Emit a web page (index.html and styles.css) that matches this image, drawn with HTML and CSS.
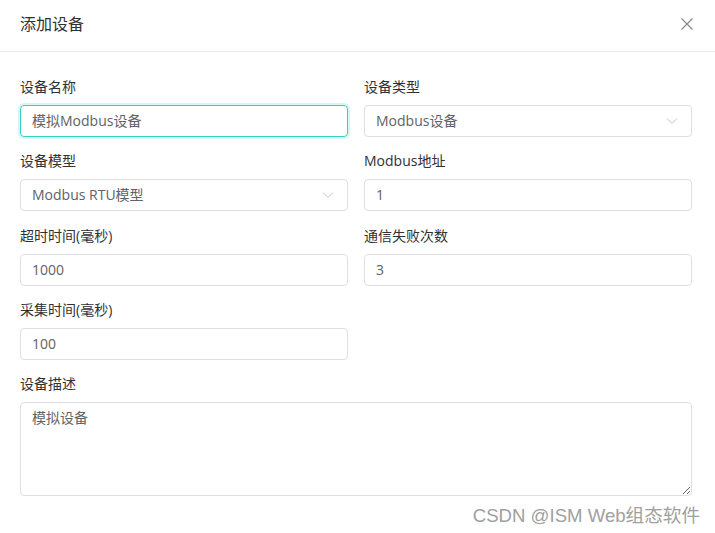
FILE: index.html
```html
<!DOCTYPE html>
<html lang="zh-CN">
<head>
<meta charset="utf-8">
<title>添加设备</title>
<link rel="stylesheet" href="styles.css">
</head>
<body>
<div class="dialog">
  <div class="header">
    <span class="title">添加设备</span>
    <svg class="close" width="14" height="14" viewBox="0 0 14 14"><path d="M1.5 1.5L12.5 12.5M12.5 1.5L1.5 12.5" stroke="#8c8c8c" stroke-width="1.3" fill="none"/></svg>
  </div>
  <div class="body">
    <div class="grid">
      <div class="item">
        <div class="label">设备名称</div>
        <div class="input focus">模拟Modbus设备</div>
      </div>
      <div class="item">
        <div class="label">设备类型</div>
        <div class="input select">Modbus设备<svg class="arrow" width="12" height="8" viewBox="0 0 12 8"><path d="M1 1.5L6 6.5L11 1.5" stroke="#c0c4cc" stroke-width="1" fill="none"/></svg></div>
      </div>
      <div class="item">
        <div class="label">设备模型</div>
        <div class="input select">Modbus RTU模型<svg class="arrow" width="12" height="8" viewBox="0 0 12 8"><path d="M1 1.5L6 6.5L11 1.5" stroke="#c0c4cc" stroke-width="1" fill="none"/></svg></div>
      </div>
      <div class="item">
        <div class="label">Modbus地址</div>
        <div class="input">1</div>
      </div>
      <div class="item shift">
        <div class="label">超时时间(毫秒)</div>
        <div class="input">1000</div>
      </div>
      <div class="item shift">
        <div class="label">通信失败次数</div>
        <div class="input">3</div>
      </div>
      <div class="item">
        <div class="label">采集时间(毫秒)</div>
        <div class="input">100</div>
      </div>
      <div class="item"></div>
      <div class="item wide">
        <div class="label">设备描述</div>
        <textarea class="textarea">模拟设备</textarea>
      </div>
    </div>
  </div>
  <div class="watermark">CSDN @ISM Web组态软件</div>
</div>
</body>
</html>
```
FILE: styles.css
```css
* { box-sizing: border-box; }
html, body { margin: 0; padding: 0; background: #fff; }
body {
  font-family: "Open Sans", "Noto Sans CJK SC", sans-serif;
  color: #303133;
  width: 715px;
  height: 533px;
  overflow: hidden;
}
.dialog { width: 715px; height: 533px; position: relative; }
.header {
  height: 52px;
  border-bottom: 1px solid #ebebeb;
  display: flex;
  align-items: center;
  justify-content: space-between;
  padding: 0 21px 3px 20px;
}
.title { font-size: 16px; line-height: 22px; color: #303133; }
.close { display: block; }
.body { padding: 24px 23px 0 20px; }
.grid {
  display: grid;
  grid-template-columns: 328px 328px;
  column-gap: 16px;
}
.item { margin-bottom: 13px; }
.item.shift { padding-top: 1px; }
.item.wide { grid-column: 1 / span 2; }
.label {
  font-size: 14px;
  line-height: 22px;
  margin-bottom: 7px;
  color: #303133;
}
.input {
  height: 32px;
  border: 1px solid #dcdfe6;
  border-radius: 4px;
  padding: 0 11px;
  font-size: 14px;
  line-height: 30px;
  color: #606266;
  display: flex;
  align-items: center;
  justify-content: space-between;
}
.input.focus {
  border-color: #36cfc9;
  box-shadow: 0 0 0 2px rgba(54, 207, 201, 0.2);
}
.arrow { display: block; margin-right: 2px; }
.textarea {
  display: block;
  width: 672px;
  height: 94px;
  border: 1px solid #dcdfe6;
  border-radius: 4px;
  padding: 4px 11px;
  font-family: "Open Sans", "Noto Sans CJK SC", sans-serif;
  font-size: 14px;
  line-height: 22px;
  color: #606266;
  resize: both;
  outline: none;
}
.watermark {
  position: absolute;
  right: 15px;
  bottom: 6px;
  font-family: "Liberation Sans", "Noto Sans CJK SC", sans-serif;
  font-size: 18.6px;
  line-height: 22px;
  color: #a0a0a0;
  text-shadow: 0 0 1px #fff;
}
```
